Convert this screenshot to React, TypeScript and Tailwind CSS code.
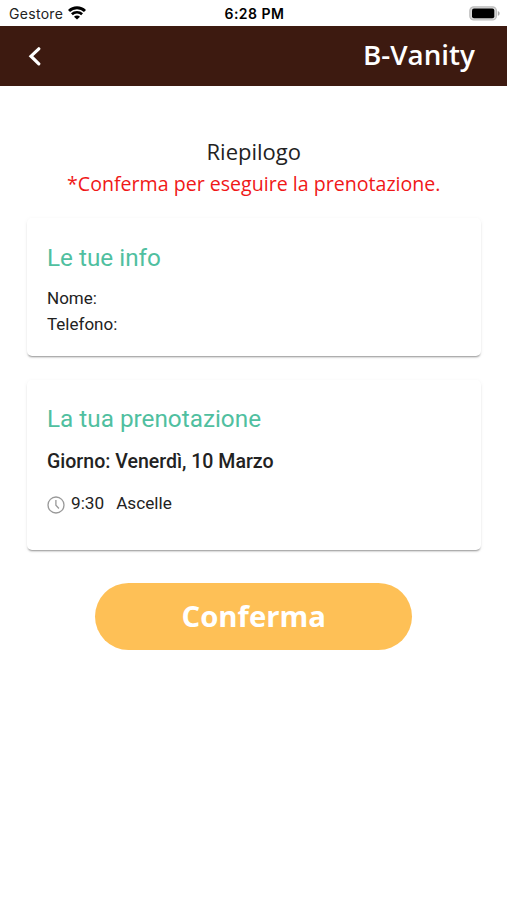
import { ReactNode } from 'react';

interface Appointment {
  time: string;
  service: string;
}

interface CardProps {
  title: string;
  className?: string;
  children: ReactNode;
}

const appointments: Appointment[] = [{ time: '9:30', service: 'Ascelle' }];

const StatusBar = () => (
  <div className="grid h-[25.5px] grid-cols-3 items-center bg-white pt-0.5 pl-[9px] pr-[7px] font-['Inter',sans-serif] text-black">
    <div className="flex items-center gap-[5px]">
      <span className="text-[14px] leading-none tracking-[0.3px] text-[#222]">Gestore</span>
      <svg width="18" height="14" viewBox="0 0 18 14" fill="none" stroke="currentColor" className="-mt-0.5">
        <path d="M1 5a11.4 11.4 0 0 1 16 0" strokeWidth="2.9" />
        <path d="M3.9 8.3a7.3 7.3 0 0 1 10.2 0" strokeWidth="2.6" />
        <path d="M9 13.6 6 10.7a4.2 4.2 0 0 1 6 0Z" fill="currentColor" stroke="none" />
      </svg>
    </div>
    <span className="text-center text-[14px] leading-none font-semibold tracking-[0.5px]">6:28 PM</span>
    <svg width="31" height="15" viewBox="0 0 31 15" className="-mt-px justify-self-end">
      <rect x="0.8" y="0.8" width="26.6" height="13.2" rx="4" fill="#d8d8d8" stroke="#bdbdbd" strokeWidth="1.2" />
      <rect x="3" y="2.6" width="22.3" height="9.6" rx="2" fill="#000" />
      <path d="M28.8 5v4.8c1.1-.4 1.8-1.3 1.8-2.4S29.9 5.4 28.8 5Z" fill="#aaa" />
    </svg>
  </div>
);

const Header = () => (
  <header className="flex h-[60.5px] items-center justify-between bg-[#3d1a10] pr-8 pl-[28px] text-white">
    <button type="button" aria-label="Indietro">
      <svg width="14" height="20" viewBox="0 0 14 20" fill="none" stroke="currentColor" strokeWidth="3.2" strokeLinecap="round">
        <path d="M10.8 2.8 3 10.2l7.8 7.6" />
      </svg>
    </button>
    <h1 className="-mt-px font-['Open_Sans',sans-serif] text-[27.8px] leading-none font-semibold">B-Vanity</h1>
  </header>
);

const Card = ({ title, className = '', children }: CardProps) => (
  <section
    className={`rounded-[5px] bg-white px-5 font-['Roboto',sans-serif] text-[#222] shadow-[0_2px_2px_-1px_rgba(0,0,0,0.4),0_1px_4px_rgba(0,0,0,0.06)] ${className}`}
  >
    <h2 className="text-[24.3px] leading-[30px] text-[#50bfa0]">{title}</h2>
    {children}
  </section>
);

export default function App() {
  return (
    <div className="min-h-[900px] w-full bg-white">
      <StatusBar />
      <Header />

      <main className="pt-[50px] pr-[26.5px] pl-[27px]">
        <div className="text-center font-['Open_Sans',sans-serif]">
          <p className="text-[22px] leading-[31px] text-[#222]">Riepilogo</p>
          <p className="text-[19.6px] leading-[33px] text-[#f01818]">*Conferma per eseguire la prenotazione.</p>
        </div>

        <Card title="Le tue info" className="mt-[18px] h-[138px] pt-[25px]">
          <div className="mt-[12px] text-[17px] leading-[26px]">
            <p>Nome:</p>
            <p>Telefono:</p>
          </div>
        </Card>

        <Card title="La tua prenotazione" className="mt-[24px] h-[170px] pt-[24px]">
          <p className="mt-[16px] text-[19.55px] leading-6 font-medium">Giorno: Venerdì, 10 Marzo</p>
          {appointments.map(({ time, service }) => (
            <div key={time} className="mt-[17px] flex items-center text-[17.2px] leading-6">
              <svg width="18" height="18" viewBox="0 0 18 18" fill="none" stroke="#999" strokeWidth="1.3" className="mt-[3px] mr-[6px]">
                <circle cx="9" cy="9" r="8" />
                <path d="M8.9 4v5.2l3 3.3" />
              </svg>
              <span className="mr-[12px]">{time}</span>
              <span>{service}</span>
            </div>
          ))}
        </Card>

        <button
          type="button"
          className="mx-auto mt-[33px] block h-[67px] w-[317px] rounded-full bg-[#fec056] font-['Open_Sans',sans-serif] text-[29.3px] font-bold text-white"
        >
          Conferma
        </button>
      </main>
    </div>
  );
}
